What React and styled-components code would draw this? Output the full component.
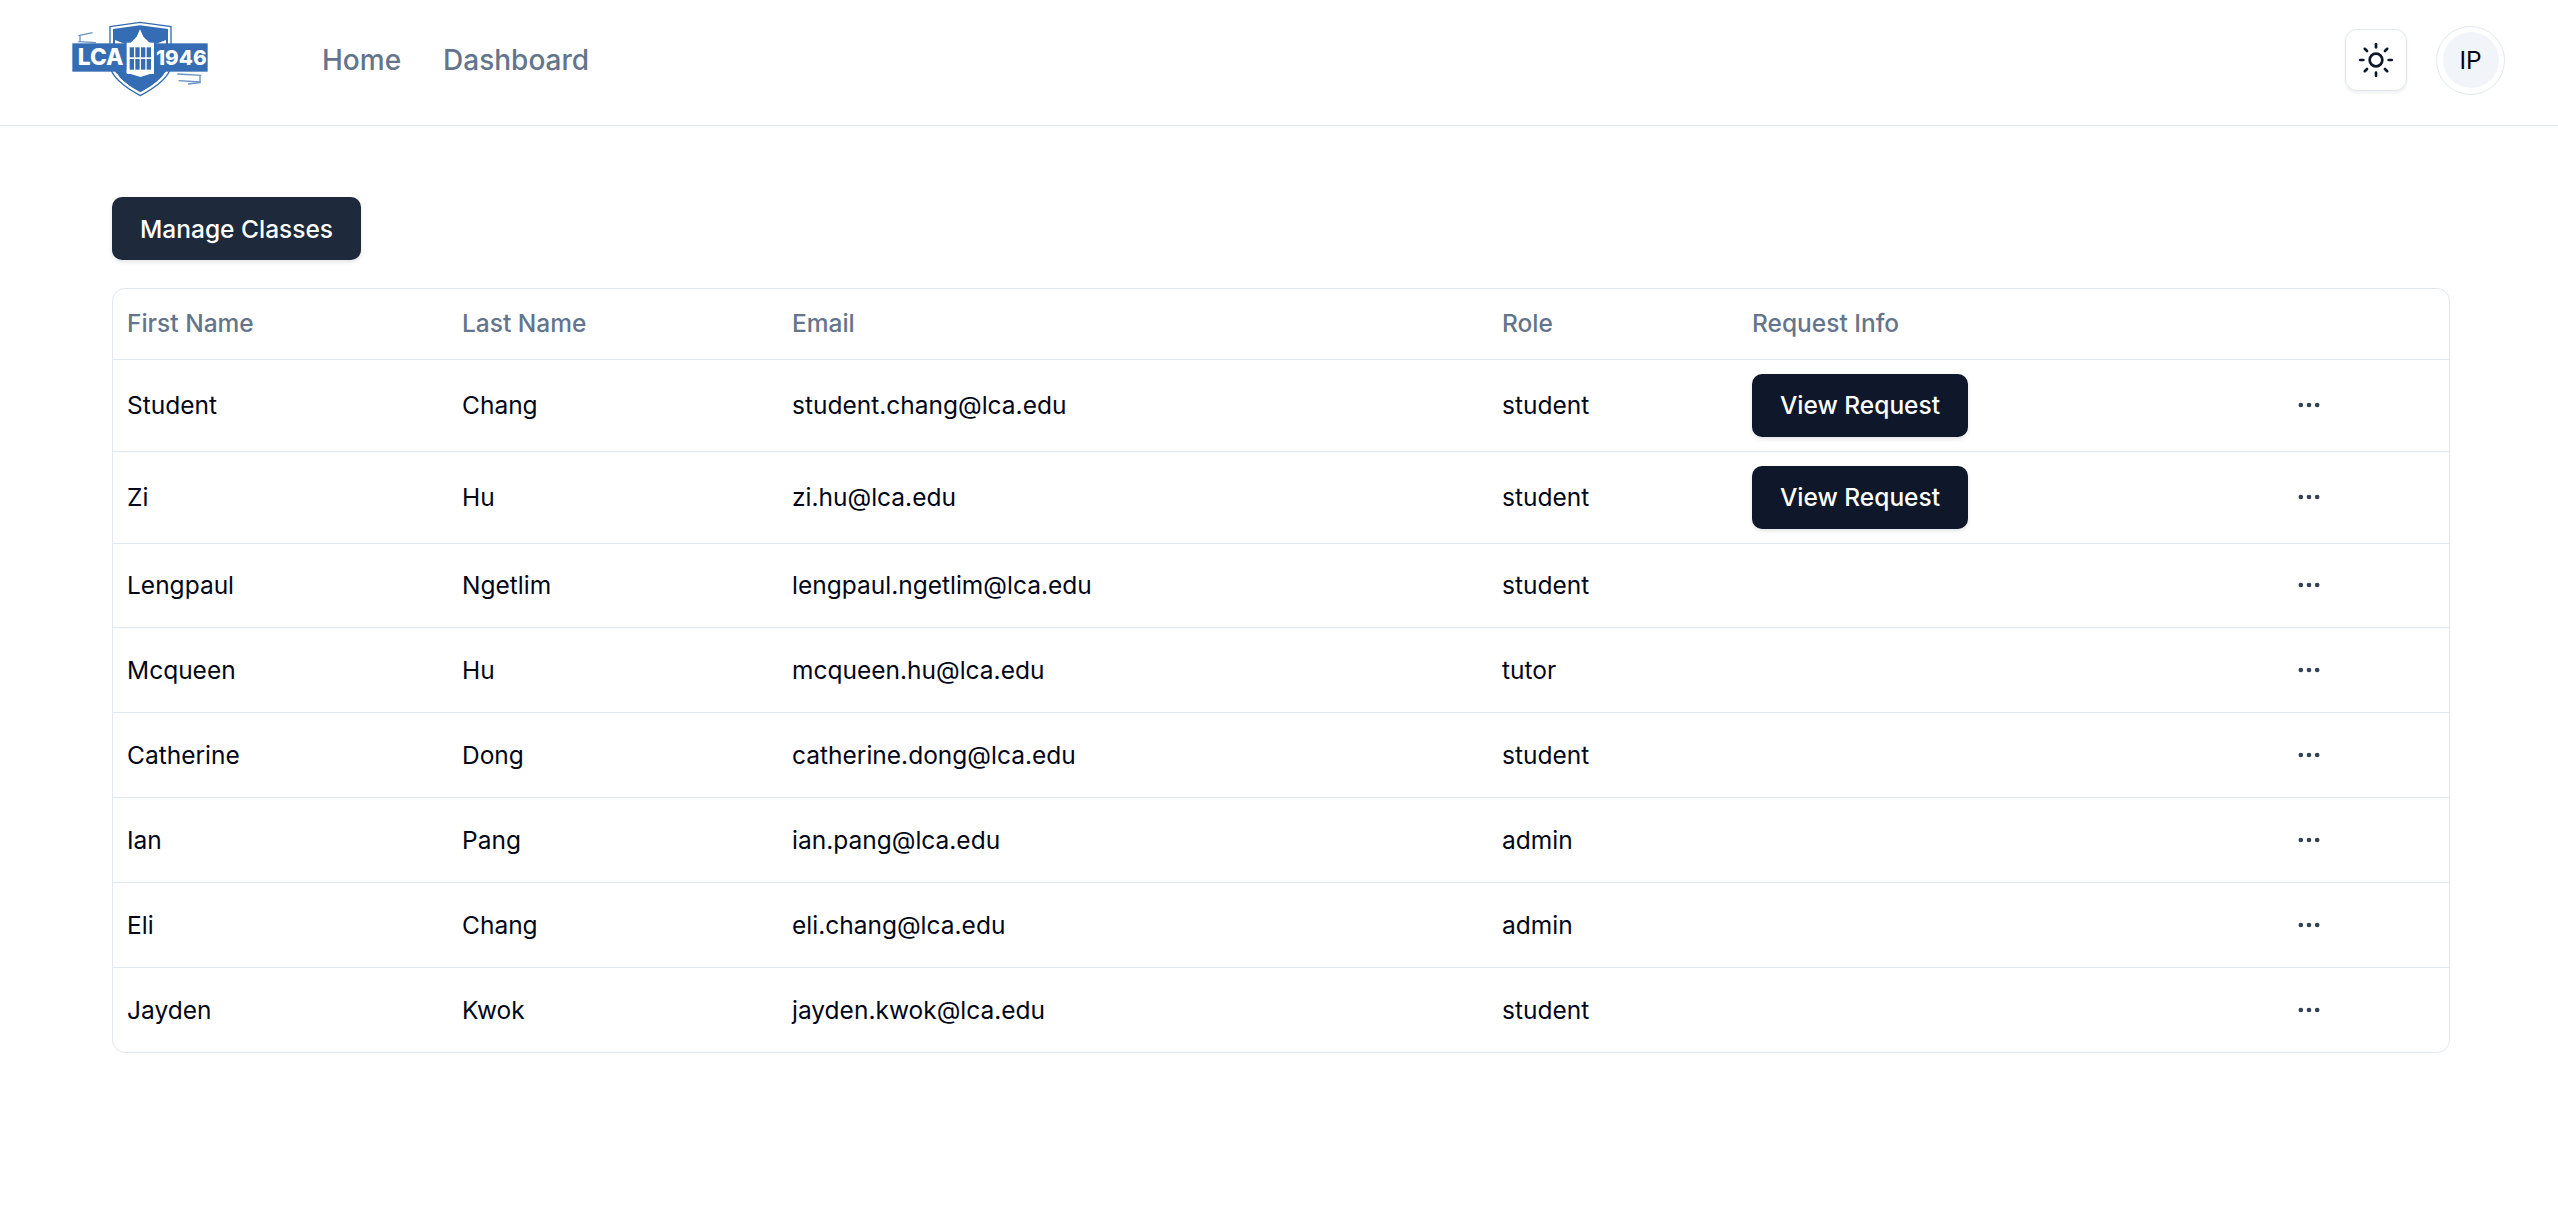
import React from "react";
import styled, { createGlobalStyle } from "styled-components";
import { Sun, MoreHorizontal } from "lucide-react";

const Global = createGlobalStyle`
  html, body { margin: 0; padding: 0; background: #fff; }
  body { font-family: Inter, "Noto Sans", sans-serif; color: #020617; }
  button { font-family: inherit; }
`;

const Page = styled.div`
  min-height: 1223px;
  background: #fff;
`;

const Header = styled.header`
  height: 126px;
  box-sizing: border-box;
  border-bottom: 1.5px solid #e2e8f0;
  display: flex;
  align-items: center;
  padding: 0 53px 5px 70px;
`;

const LogoLink = styled.a`
  display: block;
  width: 140px;
  height: 80px;
  margin-right: 112px;
  flex: none;
`;

const Nav = styled.nav`
  display: flex;
  gap: 42px;
  flex: 1;
`;

const NavLink = styled.a`
  font-size: 28px;
  font-weight: 500;
  color: #64748b;
  text-decoration: none;
`;

const Actions = styled.div`
  display: flex;
  align-items: center;
  gap: 29px;
`;

const ThemeButton = styled.button`
  width: 62px;
  height: 62px;
  border: 1.5px solid #e2e8f0;
  border-radius: 12px;
  background: #fff;
  box-shadow: 0 1.5px 3px rgba(15, 23, 42, 0.07);
  display: flex;
  align-items: center;
  justify-content: center;
  padding: 0;
  color: #0f172a;
`;

const Avatar = styled.button`
  width: 69px;
  height: 69px;
  border-radius: 50%;
  border: 1.5px solid #e2e8f0;
  background: #fff;
  padding: 5.5px;
  display: flex;
  box-sizing: border-box;
`;

const AvatarFace = styled.span`
  flex: 1;
  border-radius: 50%;
  background: #f1f5f9;
  display: flex;
  align-items: center;
  justify-content: center;
  font-size: 24.5px;
  color: #020617;
`;

const Main = styled.main`
  padding: 71px 108px 0 112px;
`;

const ManageButton = styled.button`
  display: block;
  width: 249px;
  height: 63px;
  border: 0;
  border-radius: 10px;
  background: #1e293b;
  color: #fff;
  font-size: 24.5px;
  font-weight: 500;
  box-shadow: 0 2px 4px rgba(15, 23, 42, 0.12);
  padding: 0;
  margin-bottom: 28px;
`;

const TableCard = styled.div`
  border: 1.5px solid #e2e8f0;
  border-radius: 13px;
  overflow: hidden;
`;

const Table = styled.table`
  width: 100%;
  border-collapse: collapse;
  table-layout: fixed;
  font-size: 24.5px;
`;

const HeadCell = styled.th`
  box-sizing: border-box;
  width: ${(p) => p.$w || "auto"};
  height: 70px;
  padding: 0 14px 2px;
  text-align: left;
  font-weight: 500;
  color: #64748b;
  border-bottom: 1.5px solid #e2e8f0;
`;

const Row = styled.tr`
  height: ${(p) => (p.$tall ? "92px" : "84.9px")};
  border-bottom: 1.5px solid #e2e8f0;
  &:last-child { border-bottom: 0; }
`;

const Cell = styled.td`
  box-sizing: border-box;
  padding: 0 14px;
  color: #020617;
`;

const ViewButton = styled.button`
  display: block;
  width: 216px;
  height: 63px;
  border: 0;
  border-radius: 10px;
  background: #0f172a;
  color: #fff;
  font-size: 24.5px;
  font-weight: 500;
  padding: 0;
  box-shadow: 0 2px 4px rgba(15, 23, 42, 0.12);
`;

const DotsButton = styled.button`
  width: 70px;
  height: 40px;
  border: 0;
  background: transparent;
  padding: 0;
  display: flex;
  align-items: center;
  justify-content: center;
  color: #334155;
`;

function Logo() {
  return (
    <svg width="140" height="80" viewBox="30 30 420 240" xmlns="http://www.w3.org/2000/svg">
      <path d="M150 50 L240 37 L333 50 V170 Q325 212 241 257 Q158 212 150 170 Z" fill="#fff" stroke="#346db3" strokeWidth="4" />
      <path d="M159 57 L240 46 L324 57 V168 Q316 206 241 247 Q166 206 159 168 Z" fill="#346db3" />
      <path d="M165 90 L205 106 L230 80 L240 58 L250 80 L277 106 L318 90 L318 112 H165 Z" fill="#fff" />
      <path d="M170 190 Q180 215 241 250 Q305 215 315 190" fill="none" stroke="#fff" strokeWidth="3" />
      <g fill="none" stroke="#346db3" strokeWidth="4" opacity="0.75">
        <path d="M55 77 L98 68" />
        <path d="M55 95 L108 98" />
        <path d="M60 78 V95" />
        <path d="M352 192 L424 196" />
        <path d="M356 212 L422 216" />
        <path d="M420 196 V218 L384 222" />
      </g>
      <rect x="37" y="100" width="406" height="85" fill="#346db3" />
      <rect x="200" y="98" width="82" height="94" fill="#fff" />
      <path d="M200 188 L241 201 L282 188 V180 H200 Z" fill="#fff" />
      <g fill="#346db3">
        <rect x="209" y="112" width="13" height="30" />
        <rect x="226" y="112" width="13" height="30" />
        <rect x="243" y="112" width="13" height="30" />
        <rect x="260" y="112" width="13" height="30" />
        <rect x="209" y="147" width="13" height="32" />
        <rect x="226" y="147" width="13" height="32" />
        <rect x="243" y="147" width="13" height="32" />
        <rect x="260" y="147" width="13" height="32" />
      </g>
      <text x="122" y="166" textAnchor="middle" fill="#fff" fontFamily="Inter, sans-serif" fontWeight="800" fontSize="68">LCA</text>
      <text x="364" y="166" textAnchor="middle" fill="#fff" fontFamily="Inter, sans-serif" fontWeight="800" fontSize="62">1946</text>
    </svg>
  );
}

const users = [
  ["Student", "Chang", "student.chang@lca.edu", "student", true],
  ["Zi", "Hu", "zi.hu@lca.edu", "student", true],
  ["Lengpaul", "Ngetlim", "lengpaul.ngetlim@lca.edu", "student"],
  ["Mcqueen", "Hu", "mcqueen.hu@lca.edu", "tutor"],
  ["Catherine", "Dong", "catherine.dong@lca.edu", "student"],
  ["Ian", "Pang", "ian.pang@lca.edu", "admin"],
  ["Eli", "Chang", "eli.chang@lca.edu", "admin"],
  ["Jayden", "Kwok", "jayden.kwok@lca.edu", "student"],
];

export default function App() {
  return (
    <Page>
      <Global />
      <Header>
        <LogoLink><Logo /></LogoLink>
        <Nav>
          <NavLink>Home</NavLink>
          <NavLink>Dashboard</NavLink>
        </Nav>
        <Actions>
          <ThemeButton aria-label="Toggle theme"><Sun size={38} strokeWidth={1.7} /></ThemeButton>
          <Avatar><AvatarFace>IP</AvatarFace></Avatar>
        </Actions>
      </Header>
      <Main>
        <ManageButton>Manage Classes</ManageButton>
        <TableCard>
          <Table>
            <thead>
              <tr>
                <HeadCell $w="335px">First Name</HeadCell>
                <HeadCell $w="330px">Last Name</HeadCell>
                <HeadCell $w="710px">Email</HeadCell>
                <HeadCell $w="250px">Role</HeadCell>
                <HeadCell $w="522px">Request Info</HeadCell>
                <HeadCell />
              </tr>
            </thead>
            <tbody>
              {users.map(([first, last, email, role, req]) => (
                <Row key={email} $tall={req}>
                  <Cell>{first}</Cell>
                  <Cell>{last}</Cell>
                  <Cell>{email}</Cell>
                  <Cell>{role}</Cell>
                  <Cell>{req && <ViewButton>View Request</ViewButton>}</Cell>
                  <Cell><DotsButton aria-label="Actions"><MoreHorizontal size={28} /></DotsButton></Cell>
                </Row>
              ))}
            </tbody>
          </Table>
        </TableCard>
      </Main>
    </Page>
  );
}
